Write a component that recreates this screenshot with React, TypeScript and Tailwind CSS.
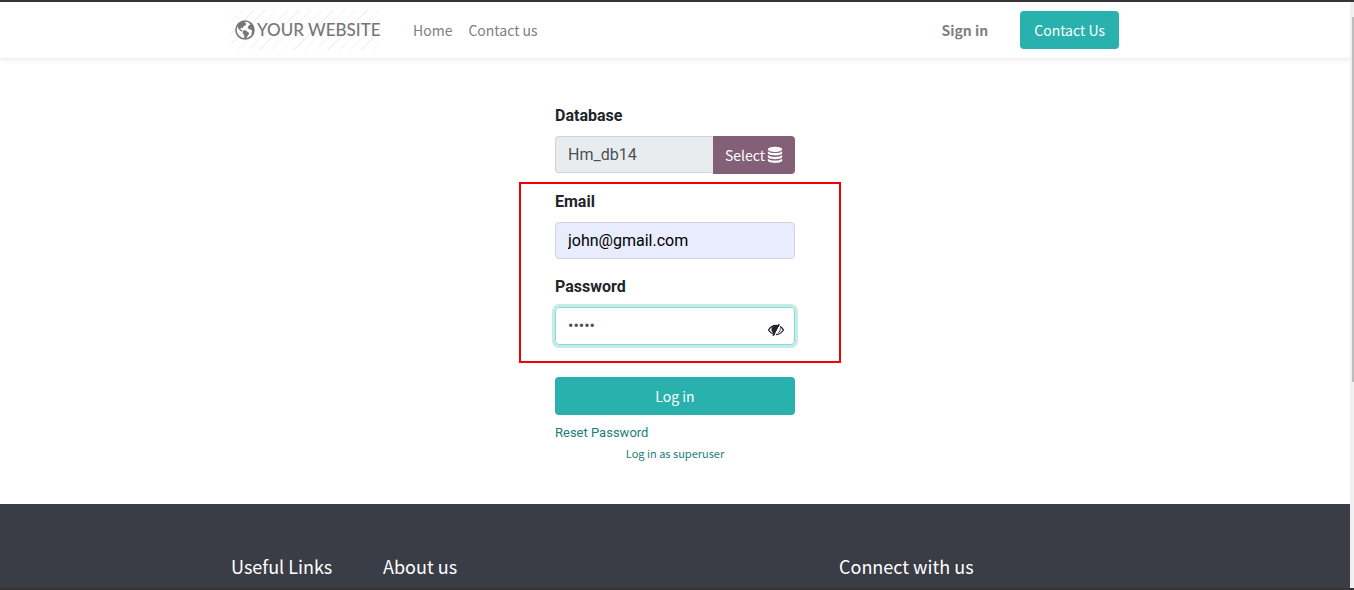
const source = "font-['Noto_Sans_CJK_SC',sans-serif]";

function GlobeIcon() {
  return (
    <svg viewBox="0 0 20 20" className="size-5 shrink-0" fill="#777" aria-hidden="true">
      <circle cx="10" cy="10" r="9" fill="none" stroke="#777" strokeWidth="1.500" />
      <path d="M3.200 4.400 6.500 1.800 10.500 1.200 10 3l1.600.8-1.400 1.700-1.700.8-.7 2-1.500-.6-1.100 1.200 1.800 1.300.9 1.200-1.600.1-2.300-1.900L2.700 7z" />
      <path d="M8.200 10.600 10.500 10.300 13.200 12.200 14.300 13.200 12.600 16 10.600 19 9.300 18.600 9.200 15.400 7.800 13.200z" />
      <path d="M14 2.300C17.500 3.800 19.300 7 19 11c-.2 1.800-1 3.600-2.200 5l-.2-3.200.6-1.800-1.400-1.400-2-.3-1-2 1.200-2 1.500-.6z" />
    </svg>
  );
}

function DatabaseIcon() {
  return (
    <svg viewBox="0 0 16 18" className="h-[18px] w-4 fill-white" aria-hidden="true">
      <ellipse cx="8" cy="3.3" rx="7.2" ry="2.6" />
      <path d="M.8 5.200C2 6.400 5 7.100 8 7.100s6-.7 7.200-1.900v1.900c0 1.400-3.200 2.400-7.200 2.400S.8 8.500.8 7.100z" />
      <path d="M.8 9C2 10.200 5 10.900 8 10.900s6-.7 7.200-1.900v1.800c0 1.400-3.200 2.400-7.200 2.400S.8 12.200.8 10.800z" />
      <path d="M.8 12.700C2 13.900 5 14.600 8 14.600s6-.7 7.200-1.900v1.800c0 1.400-3.200 2.400-7.200 2.400S.8 15.900.8 14.500z" />
    </svg>
  );
}

function HiddenEyeIcon() {
  return (
    <svg viewBox="0 0 18 14" className="h-3.5 w-[18px]" fill="none" stroke="#212529" aria-hidden="true">
      <path d="M1.500 7c2-3.200 4.800-4.500 7.500-4.500S14.500 3.800 16.500 7c-2 3.200-4.800 4.500-7.500 4.500S3.500 10.200 1.500 7z" strokeWidth="1.300" />
      <path d="M5.500 4.500C7 2.800 9 2.600 11 3.200L7.200 10.500C5 9.500 4.200 6.500 5.500 4.500z" fill="#212529" />
      <path d="M12.200 1 6 13" strokeWidth="1.400" />
      <path d="M13.400 2 8 12.500" stroke="#fff" strokeWidth="1" />
      <path d="M13.200 5.200c.4 1.800-.4 3.800-2.200 4.800" strokeWidth=".8" />
    </svg>
  );
}

export default function App() {
  return (
    <div className="relative flex h-screen flex-col overflow-hidden border-y-2 border-[#383435] bg-white font-[Roboto,sans-serif] text-base text-[#212529]">
      <div className="flex min-h-0 flex-1">
        <div className="flex min-w-0 flex-1 flex-col">
          <header className={`border-b border-[#f0f0f0] shadow-[0_2px_4px_rgba(0,0,0,0.06)] ${source}`}>
            <div className="mx-auto flex h-14 max-w-[888px] items-center text-sm text-[#808080]">
              <a
                href="#home"
                className="flex h-10 w-[150px] items-center gap-0.5 bg-[repeating-linear-gradient(135deg,#f2f2f2_0px,#f2f2f2_1px,transparent_1px,transparent_8px)] pl-1 font-[Lato,sans-serif] text-[17px] font-medium whitespace-nowrap text-[#777]"
              >
                <GlobeIcon />
                YOUR WEBSITE
              </a>
              <nav className="ml-8 flex gap-4">
                <a href="#home">Home</a>
                <a href="#contact">Contact us</a>
              </nav>
              <a href="#signin" className="ml-auto font-bold">Sign in</a>
              <a href="#contact" className="ml-8 flex h-[38px] items-center rounded bg-[#28b1ad] px-3.5 text-white">
                Contact Us
              </a>
            </div>
          </header>

          <main className="flex flex-1 justify-center pt-[45px]">
            <form className="w-60" onSubmit={(e) => e.preventDefault()}>
              <label htmlFor="db" className="block leading-6 font-bold">Database</label>
              <div className="mt-2 flex items-start">
                <input
                  id="db"
                  readOnly
                  defaultValue="Hm_db14"
                  className="h-[37px] min-w-0 flex-1 rounded-l border border-r-0 border-[#ced4da] bg-[#e9ecef] px-3 text-[#495057]"
                />
                <button type="button" className={`flex h-[38px] items-center gap-0.5 rounded-r bg-[#835f78] px-3 text-sm text-white ${source}`}>
                  Select
                  <DatabaseIcon />
                </button>
              </div>
              <label htmlFor="email" className="mt-4 block leading-6 font-bold">Email</label>
              <input
                id="email"
                type="email"
                defaultValue="john@gmail.com"
                className="mt-2 h-[37px] w-full rounded border border-[#ced4da] bg-[#e8ecfe] px-3 text-black"
              />
              <label htmlFor="password" className="mt-4 block leading-6 font-bold">Password</label>
              <div className="mt-2 flex h-[38px] items-center rounded border border-[#82dcd8] ring-3 ring-[#c6ebe8]">
                <input
                  id="password"
                  type="password"
                  defaultValue="admin"
                  className="min-w-0 flex-1 px-3 text-[#495057] outline-none"
                />
                <button type="button" aria-label="Show password" className="mr-[9px] pt-2">
                  <HiddenEyeIcon />
                </button>
              </div>
              <button type="submit" className={`mt-8 h-[38px] w-full rounded bg-[#28b1ad] text-sm text-white ${source}`}>
                Log in
              </button>
              <a href="#reset" className="mt-2 block text-[13px] leading-5 text-[#1c7d7a]">Reset Password</a>
              <a href="#superuser" className={`block text-center text-[11px] leading-5 text-[#1c7d7a] ${source}`}>
                Log in as superuser
              </a>
            </form>
          </main>

          <footer className={`h-21 bg-[#3a3d46] pt-12 text-lg leading-7 text-white ${source}`}>
            <div className="mx-auto grid max-w-[888px] grid-cols-12 gap-6 whitespace-nowrap">
              <h2 className="col-span-2">Useful Links</h2>
              <h2 className="col-span-6">About us</h2>
              <h2 className="col-span-4">Connect with us</h2>
            </div>
          </footer>
        </div>
        <div className="w-1 bg-[#f0f0f0] pt-[15px] pl-0.5" aria-hidden="true">
          <div className="h-[64%] bg-[#bdbdbd]" />
        </div>
      </div>
      <div className="pointer-events-none absolute top-[180px] left-1/2 h-[181px] w-[322px] -translate-x-[158px] border-2 border-[#f40000]" />
    </div>
  );
}
